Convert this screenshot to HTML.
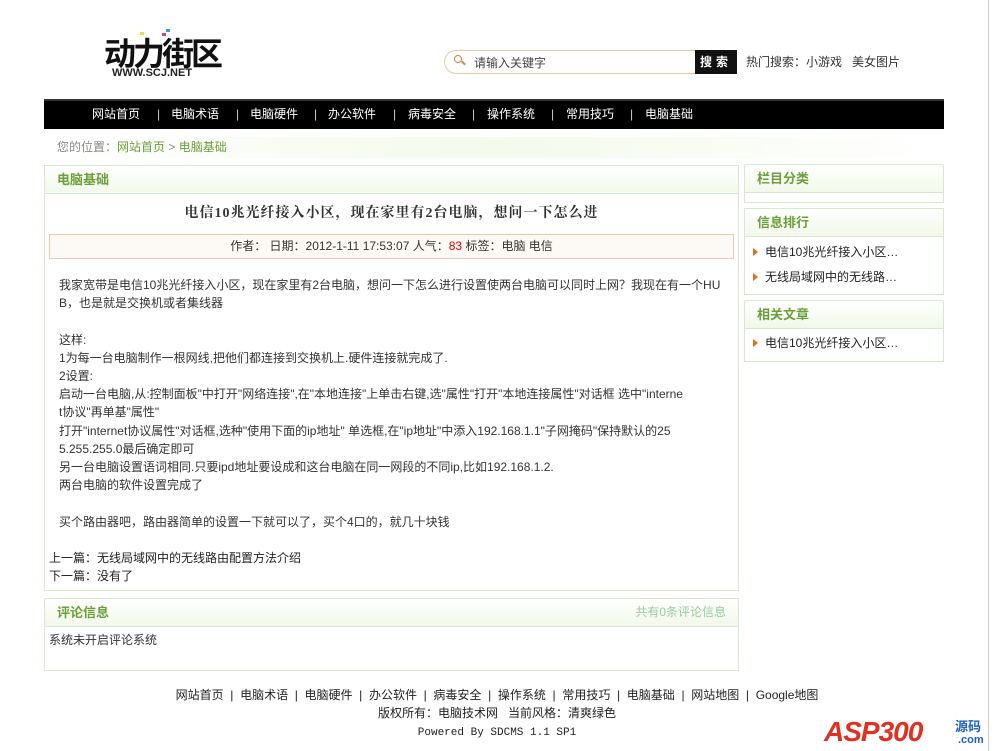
<!DOCTYPE html>
<html><head><meta charset="utf-8"><style>
*{margin:0;padding:0;box-sizing:border-box}
body{width:994px;height:751px;background:#fff;font:12px "Liberation Sans","Noto Sans CJK SC",sans-serif;color:#333;position:relative;overflow:hidden}
.abs{position:absolute}
.box{position:absolute;border:1px solid #d6e8cf;background:#fff}
.hd{height:28px;line-height:27px;padding-left:12px;font-weight:bold;color:#6a9f3a;font-size:13px;background:linear-gradient(#fff,#f1f8ea);border-bottom:1px solid #d6e8cf}
.nav{left:44px;top:99px;width:900px;height:30px;background:#000;border-top:2px solid #333;color:#fff;font-size:12px;line-height:26px}
.nav span{position:absolute;top:0}
.nav i{position:absolute;top:0;font-style:normal;color:#ccc}
.li{padding-left:20px;position:relative;height:25px;line-height:25px;font-size:12px;color:#222}
.li:before{content:"";position:absolute;left:8px;top:8px;border-left:5px solid #e07020;border-top:4px solid transparent;border-bottom:4px solid transparent}
.txt{position:absolute;left:59px;top:276px;width:665px;line-height:18.2px;color:#333}
</style></head><body>
<div class="abs" style="left:104px;top:38px;font:bold 32px 'Liberation Sans','Noto Sans CJK SC',sans-serif;color:#111;letter-spacing:-3px;line-height:32px">动力街区</div>
<div class="abs" style="left:112px;top:67px;font:bold 11px 'Liberation Sans';color:#222">WWW.SCJ.NET</div>
<div class="abs" style="left:140px;top:32px;width:4px;height:3px;background:#e5e040"></div>
<div class="abs" style="left:162px;top:33px;width:4px;height:3px;background:#d040a0"></div>
<div class="abs" style="left:166px;top:29px;width:4px;height:3px;background:#40a0c0"></div>
<div class="abs" style="left:444px;top:50px;width:252px;height:24px;border:1px solid #e8c89a;border-radius:12px 0 0 12px;border-right:none;background:#fff"></div>
<div class="abs" style="left:454px;top:55px;width:8px;height:8px;border:1.5px solid #e08040;border-radius:50%"></div>
<div class="abs" style="left:461px;top:62px;width:5px;height:1.5px;background:#e08040;transform:rotate(45deg)"></div>
<div class="abs" style="left:474px;top:54px;color:#444">请输入关键字</div>
<div class="abs" style="left:695px;top:50px;width:42px;height:24px;background:#111;color:#fff;line-height:24px;text-align:center;font-weight:bold;font-size:12px;letter-spacing:4px">搜索</div>
<div class="abs" style="left:746px;top:53px;color:#333">热门搜索：小游戏&nbsp;&nbsp;&nbsp;美女图片</div>
<div class="abs nav">
<span style="left:48px">网站首页</span><i style="left:113px">|</i>
<span style="left:127px">电脑术语</span><i style="left:192px">|</i>
<span style="left:206px">电脑硬件</span><i style="left:270px">|</i>
<span style="left:284px">办公软件</span><i style="left:349px">|</i>
<span style="left:364px">病毒安全</span><i style="left:428px">|</i>
<span style="left:443px">操作系统</span><i style="left:507px">|</i>
<span style="left:522px">常用技巧</span><i style="left:586px">|</i>
<span style="left:601px">电脑基础</span></div>
<div class="abs" style="left:44px;top:137px;width:900px;height:21px;background:linear-gradient(90deg,#fff,#f4faec 50%,#fff);line-height:21px;padding-left:13px;color:#888">您的位置：<span style="color:#6a9f3a">网站首页</span> &gt; <span style="color:#6a9f3a">电脑基础</span></div>
<div class="box" style="left:44px;top:165px;width:695px;height:426px"><div class="hd">电脑基础</div></div>
<div class="abs" style="left:44px;top:202px;width:695px;text-align:center;font:bold 14px 'Liberation Serif','Noto Serif CJK SC',serif;color:#333;letter-spacing:1px">电信10兆光纤接入小区，现在家里有2台电脑，想问一下怎么进</div>
<div class="abs" style="left:49px;top:234px;width:685px;height:25px;border:1px solid #f0c8a8;background:#fdf9f5;text-align:center;line-height:23px">作者： 日期：2012-1-11 17:53:07 人气：<span style="color:#d00">83</span> 标签：电脑 电信</div>
<div class="txt">我家宽带是电信10兆光纤接入小区，现在家里有2台电脑，想问一下怎么进行设置使两台电脑可以同时上网？我现在有一个HU<br>B，也是就是交换机或者集线器<br><br>这样:<br>1为每一台电脑制作一根网线,把他们都连接到交换机上.硬件连接就完成了.<br>2设置:<br>启动一台电脑,从:控制面板"中打开"网络连接",在"本地连接"上单击右键,选"属性"打开"本地连接属性"对话框 选中"interne<br>t协议"再单基"属性"<br>打开"internet协议属性"对话框,选种"使用下面的ip地址" 单选框,在"ip地址"中添入192.168.1.1"子网掩码"保持默认的25<br>5.255.255.0最后确定即可<br>另一台电脑设置语词相同.只要ipd地址要设成和这台电脑在同一网段的不同ip,比如192.168.1.2.<br>两台电脑的软件设置完成了<br><br>买个路由器吧，路由器简单的设置一下就可以了，买个4口的，就几十块钱</div>
<div class="abs" style="left:49px;top:549px;line-height:18px;color:#222">上一篇：无线局域网中的无线路由配置方法介绍<br>下一篇：没有了</div>
<div class="box" style="left:44px;top:598px;width:695px;height:73px"><div class="hd">评论信息<span style="float:right;margin-right:12px;font-weight:normal;font-size:12px;color:#9c9">共有0条评论信息</span></div><div style="padding:4px 4px;color:#333">系统未开启评论系统</div></div>
<div class="box" style="left:744px;top:164px;width:200px;height:39px"><div class="hd">栏目分类</div></div>
<div class="box" style="left:744px;top:208px;width:200px;height:87px"><div class="hd">信息排行</div><div style="padding-top:3px"><div class="li">电信10兆光纤接入小区…</div><div class="li">无线局域网中的无线路…</div></div></div>
<div class="box" style="left:744px;top:300px;width:200px;height:62px"><div class="hd">相关文章</div><div style="padding-top:2px"><div class="li">电信10兆光纤接入小区…</div></div></div>
<div class="abs" style="left:0;top:686px;width:994px;text-align:center;line-height:18px;color:#222">网站首页 &nbsp;|&nbsp; 电脑术语 &nbsp;|&nbsp; 电脑硬件 &nbsp;|&nbsp; 办公软件 &nbsp;|&nbsp; 病毒安全 &nbsp;|&nbsp; 操作系统 &nbsp;|&nbsp; 常用技巧 &nbsp;|&nbsp; 电脑基础 &nbsp;|&nbsp; 网站地图 &nbsp;|&nbsp; Google地图<br>版权所有：电脑技术网&nbsp;&nbsp;&nbsp;当前风格：清爽绿色<br><span style="font:11px 'Liberation Mono',monospace">Powered By SDCMS 1.1 SP1</span></div>
<div class="abs" style="left:824px;top:716px;font:italic bold 28px 'Liberation Sans';color:#e03020;letter-spacing:-1px">ASP300</div>
<div class="abs" style="left:955px;top:716px;font:bold 13px 'Noto Sans CJK SC';color:#2060c0">源码</div>
<div class="abs" style="left:958px;top:734px;font:bold 11px 'Liberation Sans';color:#2060c0">.com</div>
<div class="abs" style="left:988px;top:0;width:1px;height:751px;background:#ccc"></div>
</body></html>
